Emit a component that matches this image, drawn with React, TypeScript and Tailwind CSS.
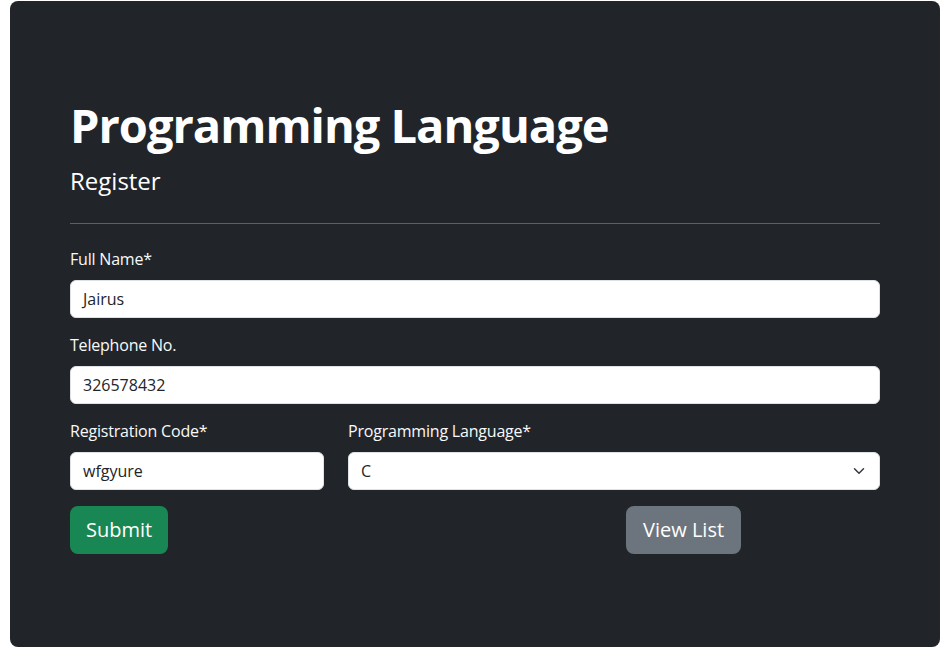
import React from "react";

const font = { fontFamily: '"Open Sans", "Noto Sans", sans-serif' };

function Label({ children }: { children: React.ReactNode }) {
  return <div className="text-[16px] leading-[22px] mb-[10px] text-[#f8f9fa] tracking-[-0.2px]">{children}</div>;
}

function Field({ label, value, className = "" }: { label: string; value: string; className?: string }) {
  return (
    <div className={className}>
      <Label>{label}</Label>
      <div className="h-[38px] bg-white border border-[#dee2e6] rounded-[6px] px-[12px] flex items-center text-[16px] text-[#212529]">
        {value}
      </div>
    </div>
  );
}

export default function App() {
  return (
    <div className="min-h-[647px] bg-white pl-[10px] pr-[8px] pt-[1px]" style={font}>
      <div className="bg-[#212529] rounded-lg h-[646px] px-[60px] pt-[95px]">
        <h1 className="text-[47px] leading-[58px] font-bold text-white tracking-[-1px]">Programming Language</h1>
        <div className="mt-[12px] text-[24px] leading-[29px] text-white">Register</div>
        <div className="mt-[28px] h-px bg-[#5c5f63]" />
        <div className="mt-[24px]">
          <Field label="Full Name*" value="Jairus" />
          <Field label="Telephone No." value="326578432" className="mt-[16px]" />
          <div className="mt-[16px] grid grid-cols-[254px_1fr] gap-x-[24px]">
            <Field label="Registration Code*" value="wfgyure" />
            <div>
              <Label>Programming Language*</Label>
              <div className="h-[38px] bg-white border border-[#dee2e6] rounded-[6px] pl-[12px] pr-[12px] flex items-center justify-between text-[16px] text-[#212529]">
                <span>C</span>
                <svg width="16" height="12" viewBox="0 0 16 16" fill="none" stroke="#343a40" strokeWidth="2" strokeLinecap="round" strokeLinejoin="round">
                  <path d="m2 5 6 6 6-6" />
                </svg>
              </div>
            </div>
          </div>
          <div className="mt-[16px] flex">
            <div className="w-[556px]">
              <button className="h-[48px] px-[16px] rounded-[8px] bg-[#198754] text-white text-[20px]">Submit</button>
            </div>
            <button className="h-[48px] px-[17px] rounded-[8px] bg-[#6c757d] text-white text-[20px]">View List</button>
          </div>
        </div>
      </div>
    </div>
  );
}
